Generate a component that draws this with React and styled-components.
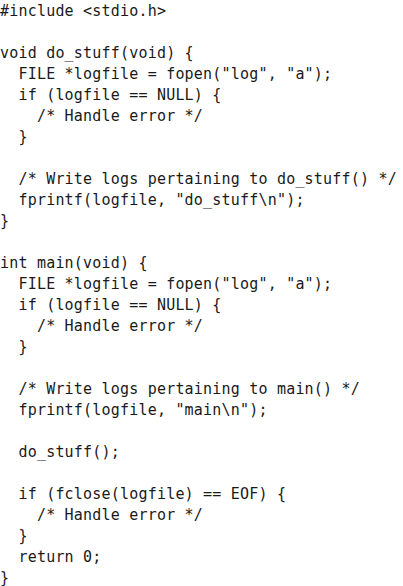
import React from 'react';
import styled, { createGlobalStyle } from 'styled-components';

const GlobalStyle = createGlobalStyle`
    html, body {
        margin: 0;
        padding: 0;
        background-color: #ffffff;
    }
`;

const Listing = styled.div`
    display: flex;
    flex-direction: column;
    gap: 5px;
    padding: 3px 0 0 0;
    font-family: "DejaVu Sans Mono", "Liberation Mono", monospace;
    font-size: 15px;
    letter-spacing: 0.2px;
    color: #1a1a1a;
`;

const Line = styled.div`
    height: 16px;
    line-height: 16px;
    white-space: pre;
`;

const code = `#include <stdio.h>

void do_stuff(void) {
  FILE *logfile = fopen("log", "a");
  if (logfile == NULL) {
    /* Handle error */
  }

  /* Write logs pertaining to do_stuff() */
  fprintf(logfile, "do_stuff\\n");
}

int main(void) {
  FILE *logfile = fopen("log", "a");
  if (logfile == NULL) {
    /* Handle error */
  }

  /* Write logs pertaining to main() */
  fprintf(logfile, "main\\n");

  do_stuff();

  if (fclose(logfile) == EOF) {
    /* Handle error */
  }
  return 0;
}`;

const App = () => {
    return (
        <>
            <GlobalStyle />
            <Listing>
                {code.split('\n').map((line, i) => (
                    <Line key={i}>{line}</Line>
                ))}
            </Listing>
        </>
    );
};

export default App;
